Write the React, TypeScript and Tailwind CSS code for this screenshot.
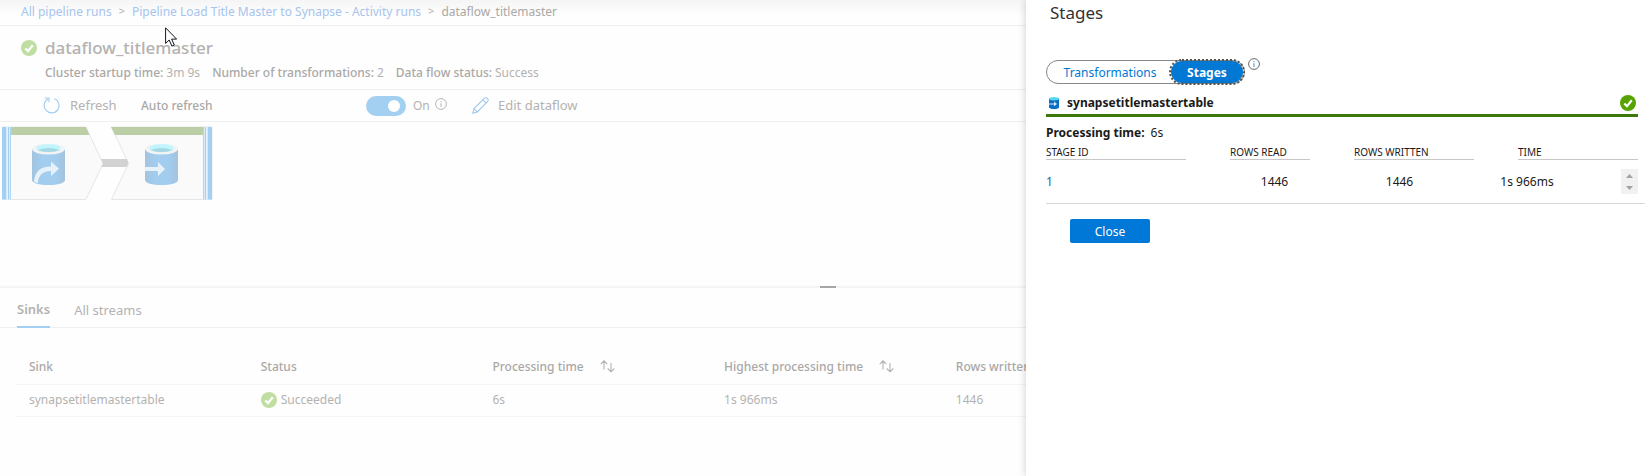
import type { ReactNode } from "react";

function CheckBadge({ color }: { color: string }) {
  return (
    <svg width="16" height="16" viewBox="0 0 16 16" className="shrink-0" aria-hidden="true">
      <circle cx="8" cy="8" r="8" fill={color} />
      <path d="M4.3 8.4 7 11.2 11.8 5.2" fill="none" stroke="#fff" strokeWidth="2.2" />
    </svg>
  );
}

function InfoIcon({ color, dot }: { color: string; dot: string }) {
  return (
    <svg width="12" height="12" viewBox="0 0 12 12" className="shrink-0" aria-hidden="true">
      <circle cx="6" cy="6" r="5.4" fill="none" stroke={color} strokeWidth="1" />
      <path d="M6 5.2V9M6 3v1.2" stroke={dot} strokeWidth="1" />
    </svg>
  );
}

function RefreshIcon() {
  return (
    <svg width="17" height="17" viewBox="0 0 17 17" fill="none" stroke="#9fcdf0" strokeWidth="1.1" aria-hidden="true">
      <path d="M11.300 1.600A7.400 7.400 0 1 1 5.400 1.800" />
      <path d="M1.800 1h4.200v4.200" />
    </svg>
  );
}

function PencilIcon() {
  return (
    <svg width="17" height="17" viewBox="0 0 17 17" fill="none" stroke="#9fc9ee" strokeWidth="1.1" aria-hidden="true">
      <path d="M.8 16.200 2 11.600 12.200 1.400a2.300 2.300 0 0 1 3.300 3.300L5.300 15Z" />
      <path d="M2 11.600 5.300 15M10.800 2.800l3.300 3.300" />
    </svg>
  );
}

function SortIcon() {
  return (
    <svg width="15" height="13" viewBox="0 0 15 13" fill="none" stroke="#b4b2b0" strokeWidth="1.1" aria-hidden="true">
      <path d="M4 9.500V1M.7 4.200 4 .9l3.300 3.300M11 3v8.800M7.700 8.500l3.300 3.300 3.300-3.300" />
    </svg>
  );
}

function FlowGraph() {
  return (
    <svg width="213" height="80" viewBox="0 0 213 80" role="img" aria-label="Data flow">
      <defs>
        <linearGradient id="drum" x1="0" x2="1" y1="0" y2="0">
          <stop offset="0" stopColor="#a3c3de" />
          <stop offset=".3" stopColor="#a2cdee" />
          <stop offset=".7" stopColor="#a2cdee" />
          <stop offset="1" stopColor="#a3c3de" />
        </linearGradient>
        <g id="cylinder">
          <path d="M0 5.500V36.500c0 3 7.300 5 16.500 5s16.500-2 16.500-5V5.500Z" fill="url(#drum)" />
          <ellipse cx="16.500" cy="5.500" rx="16.500" ry="5.500" fill="#f3f3f3" />
          <ellipse cx="16.500" cy="4.700" rx="12.200" ry="4" fill="#bff5fd" />
          <path d="M5.500 6.700Q16.500 2.500 27.500 6.700 16.500 10.500 5.500 6.700Z" fill="#a6d8e4" />
        </g>
        <g id="edge">
          <path d="M0 0h9v72.500H0Z" fill="#e8f3fb" />
          <path d="M0 0h4.300v72.500H0ZM6 0h1v72.500H6ZM7.800 0h1v72.500H7.800Z" fill="#a3d0f2" />
        </g>
      </defs>
      <path d="M2.500 5H86l17 36.500L86 77.500H2.500Z" fill="#fafafa" stroke="#e6e6e6" />
      <path d="M2 5h84l3.500 8H2Z" fill="#bbcea5" />
      <path d="M111.500 5H212v72.500H111.500l17-36Z" fill="#fafafa" stroke="#e6e6e6" />
      <path d="M111 5h101v8h-97Z" fill="#bbcea5" />
      <path d="M101 37h26l1.500 4.500-2 3.500H101l2-3.500Z" fill="#d2d2d2" />
      <use href="#edge" x="2" y="5" />
      <use href="#edge" transform="translate(212 5) scale(-1 1)" />
      <use href="#cylinder" x="32" y="21.500" />
      <path d="M34 60C34.500 50 40 44.500 51 44.500V39.500l8 7.300-8 7.200v-5c-8 0-12.500 4-13 12Z" fill="#e6f1fa" />
      <use href="#cylinder" x="145" y="21.500" />
      <path d="M145 45h13v-5l7 7-7 7v-5h-13Z" fill="#e6f1fa" />
    </svg>
  );
}

function SinkIcon() {
  return (
    <svg width="10" height="12" viewBox="0 0 10 12" className="shrink-0" aria-hidden="true">
      <path d="M0 1.500v9C0 11.400 2.200 12 5 12s5-.6 5-1.500v-9Z" fill="#0a6fc4" />
      <ellipse cx="5" cy="1.700" rx="5" ry="1.700" fill="#59d6f0" />
      <path d="M0 6.400h5V4.600l3 2.300-3 2.300V7.400H0Z" fill="#d5ebfa" />
    </svg>
  );
}

function Pointer() {
  return (
    <svg width="13" height="20" viewBox="0 0 13 20" className="absolute top-[27px] left-[165px]" aria-hidden="true">
      <path d="M.6.8v15.600l3.600-3.400 2.700 6.100 2.400-1.100-2.700-5.900h5Z" fill="#fff" stroke="#14141f" strokeWidth="1" />
    </svg>
  );
}

function Fact({ label, children }: { label: string; children: ReactNode }) {
  return (
    <div className="flex gap-[3px]">
      <dt className="font-medium text-[#aaa8a6]">{label}</dt>
      <dd>{children}</dd>
    </div>
  );
}

const sinkColumns = [
  { label: "Sink", sortable: false },
  { label: "Status", sortable: false },
  { label: "Processing time", sortable: true },
  { label: "Highest processing time", sortable: true },
  { label: "Rows written", sortable: false },
];

function Monitor() {
  return (
    <main className="text-[#b4b2b0]">
      <nav aria-label="Breadcrumb" className="flex h-[26px] items-center gap-[7px] border-b border-[#efefef] bg-linear-to-b from-[#f5f5f5] to-[#fefefe] to-60% pb-0.5 pl-[21px]">
        <a href="#runs" className="text-[#a6c4ee]">All pipeline runs</a>
        <span className="text-[11px]">&gt;</span>
        <a href="#activity" className="text-[#a6c4ee]">Pipeline Load Title Master to Synapse - Activity runs</a>
        <span className="text-[11px]">&gt;</span>
        <span className="text-[#aaa8a6]">dataflow_titlemaster</span>
      </nav>

      <header className="h-16 border-b border-[#efefef] pt-2 pl-[21px]">
        <div className="flex h-7 items-center gap-2">
          <CheckBadge color="#c1dea2" />
          <h1 className="text-[17px] font-medium">dataflow_titlemaster</h1>
        </div>
        <dl className="flex h-[22px] items-center gap-3 pl-6">
          <Fact label="Cluster startup time:">3m 9s</Fact>
          <Fact label="Number of transformations:">2</Fact>
          <Fact label="Data flow status:">Success</Fact>
        </dl>
      </header>

      <div className="flex h-8 items-center border-b border-[#efefef] pl-[43px] text-[13px]">
        <button type="button" className="flex w-[98px] items-center gap-2.5">
          <RefreshIcon />
          Refresh
        </button>
        <label htmlFor="auto-refresh" className="w-[225px] text-xs font-medium text-[#aaa8a6]">Auto refresh</label>
        <input
          id="auto-refresh"
          type="checkbox"
          role="switch"
          defaultChecked
          className="h-5 w-10 appearance-none rounded-full bg-[#d0d0d0] p-1 before:block before:size-3 before:rounded-full before:bg-white checked:bg-[#a3cff1] checked:before:ml-[18px]"
        />
        <span className="ml-[7px] w-[22px] text-xs">On</span>
        <span className="pb-[3px]">
          <InfoIcon color="#b8b6b4" dot="#b8b6b4" />
        </span>
        <button type="button" className="ml-[25px] flex items-center gap-[9px]">
          <PencilIcon />
          Edit dataflow
        </button>
      </div>

      <section className="h-[164px]">
        <FlowGraph />
      </section>

      <div role="separator" className="flex h-0.5 justify-center bg-[#f5f5f5] pl-[11px]">
        <span className="w-4 bg-[#a8a6a4]" />
      </div>

      <div role="tablist" className="flex h-10 gap-6 border-b border-[#efefef] pl-[17px] text-[13px]">
        <button type="button" role="tab" aria-selected="true" className="-mb-px border-b-2 border-[#a3cff1] pt-1.5 font-semibold">Sinks</button>
        <button type="button" role="tab" aria-selected="false" className="pt-1.5">All streams</button>
      </div>

      <div className="pt-[22px] pr-1.5 pl-[17px]">
        <table className="w-full table-fixed text-left">
          <thead>
            <tr className="h-[34px] border-b border-[#f5f5f5]">
              {sinkColumns.map((column) => (
                <th key={column.label} className="w-1/7 pl-3 font-medium text-[#aaa8a6]">
                  <span className="flex items-center gap-4">
                    {column.label}
                    {column.sortable && <SortIcon />}
                  </span>
                </th>
              ))}
              <td />
            </tr>
          </thead>
          <tbody>
            <tr className="h-8 border-b border-[#f5f5f5]">
              <td className="pl-3">synapsetitlemastertable</td>
              <td className="pl-3">
                <span className="flex items-center gap-1">
                  <CheckBadge color="#c1dea2" />
                  Succeeded
                </span>
              </td>
              <td className="pl-3">6s</td>
              <td className="pl-3">1s 966ms</td>
              <td className="pl-3">1446</td>
              <td />
            </tr>
          </tbody>
        </table>
      </div>
    </main>
  );
}

const headCell = "border-b border-[#c8c8c8] pb-px text-left font-normal";

function StagesPanel() {
  return (
    <aside className="absolute inset-y-0 right-0 w-[619px] max-w-full bg-white pl-5 text-[#1b1a19] shadow-[0_0_8px_rgba(0,0,0,0.2)]">
      <h2 className="h-[60px] pl-1 text-[17px] leading-[26px] text-[#323130]">Stages</h2>

      <div className="flex gap-[3px]">
        <div className="flex h-6 rounded-full border border-[#8a8886]">
          <button type="button" className="w-[122px] pt-0.5 pl-1 text-[#0078d4]">Transformations</button>
          <button type="button" className="-my-0.5 -mr-px w-[76px] rounded-full border-2 border-dotted border-[#55534f] bg-[#0078d4] bg-clip-padding pt-0.5 font-bold text-white">Stages</button>
        </div>
        <div className="-mt-0.5">
          <InfoIcon color="#6b6967" dot="#3a8fd6" />
        </div>
      </div>

      <div className="mr-[7px] flex h-[33px] items-center border-b-3 border-[#3b7a0a] pt-2 pr-0.5 pl-[3px]">
        <SinkIcon />
        <h3 className="flex-1 pl-2 font-bold">synapsetitlemastertable</h3>
        <CheckBadge color="#57a300" />
      </div>

      <p className="flex h-[30px] items-center gap-1.5 pt-0.5">
        <strong className="font-bold">Processing time:</strong>
        6s
      </p>

      <table className="block border-b border-[#d8d8d8]">
        <thead className="block">
          <tr className="mr-[7px] grid grid-cols-[140px_80px_120px_120px] justify-between text-[10px] leading-[11px]">
            <th className={headCell}>STAGE ID</th>
            <th className={headCell}>ROWS READ</th>
            <th className={headCell}>ROWS WRITTEN</th>
            <th className={headCell}>TIME</th>
          </tr>
        </thead>
        <tbody className="block">
          <tr className="mr-[7px] grid h-[43px] grid-cols-[166px_125px_125px_130px_1fr] items-center">
            <td><a href="#stage-1" className="text-[#1b5fa8]">1</a></td>
            <td className="text-center">1446</td>
            <td className="text-center">1446</td>
            <td className="text-center">1s 966ms</td>
            <td className="flex justify-end">
              <span className="flex w-[17px] flex-col bg-[#f1f1f1]">
                <button type="button" aria-label="Scroll up" className="flex h-[13px] items-center justify-center">
                  <svg width="7" height="4" viewBox="0 0 7 4" aria-hidden="true"><path d="M0 4 3.500 0 7 4Z" fill="#a3a3a3" /></svg>
                </button>
                <button type="button" aria-label="Scroll down" className="flex h-3 items-center justify-center">
                  <svg width="7" height="4" viewBox="0 0 7 4" aria-hidden="true"><path d="M0 0 3.500 4 7 0Z" fill="#a3a3a3" /></svg>
                </button>
              </span>
            </td>
          </tr>
        </tbody>
      </table>

      <button type="button" className="mt-[15px] ml-6 h-6 w-20 rounded-xs bg-[#0078d7] pt-0.5 text-white">Close</button>
    </aside>
  );
}

export default function App() {
  return (
    <div className="relative min-h-screen overflow-hidden bg-[#fefefe] font-['Noto_Sans','Open_Sans',sans-serif] text-xs whitespace-nowrap">
      <Monitor />
      <Pointer />
      <StagesPanel />
    </div>
  );
}
